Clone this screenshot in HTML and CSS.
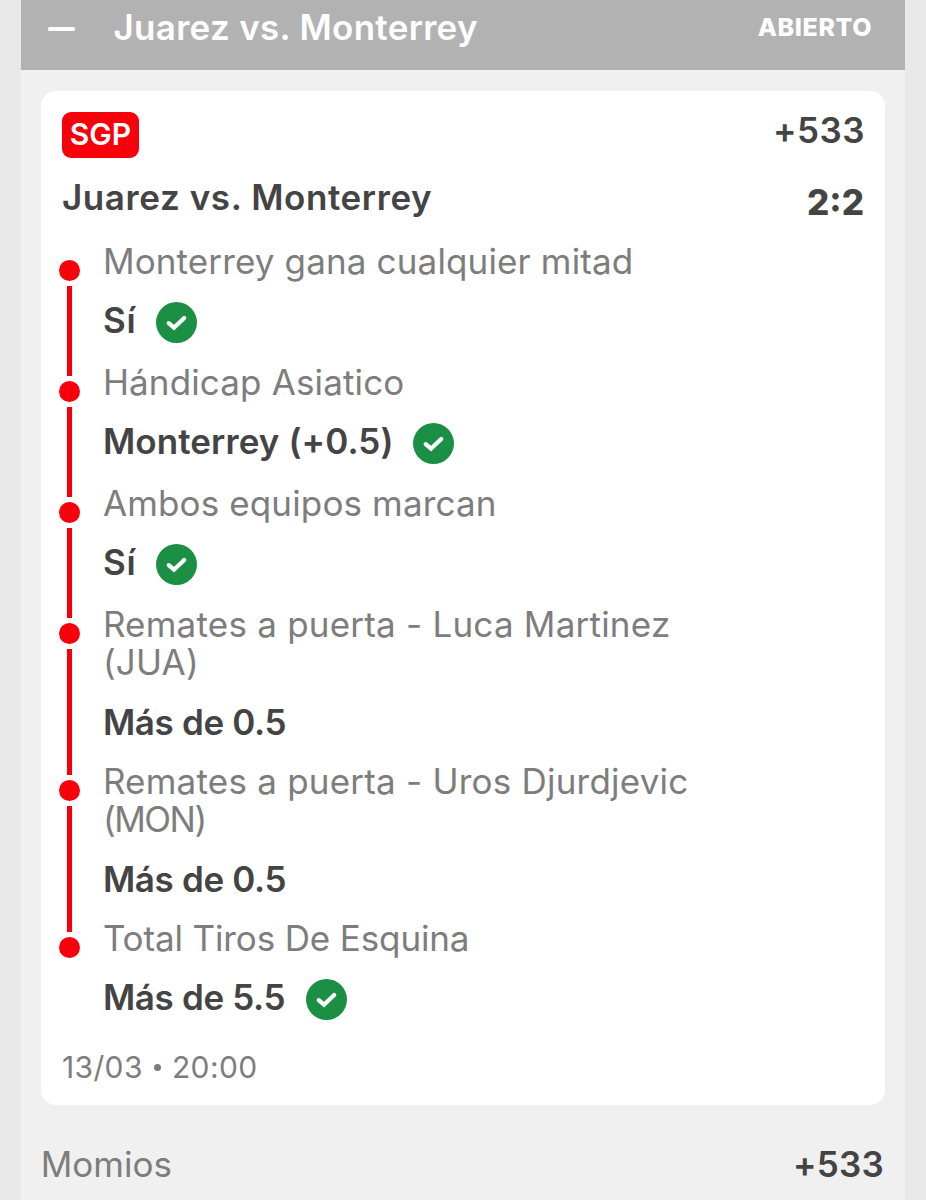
FILE: index.html
```
<!DOCTYPE html>
<html lang="es">
<head>
    <meta charset="UTF-8">
    <meta name="viewport" content="width=device-width, initial-scale=1.0">
    <title>Juarez vs. Monterrey</title>
    <link rel="stylesheet" href="styles.css">
</head>
<body>
    <!-- Check icon shared by the winning legs -->
    <svg class="sprite" aria-hidden="true">
        <symbol id="check" viewBox="0 0 41 41">
            <circle cx="20.5" cy="20.5" r="20.5" fill="#1b9044"/>
            <path d="M12.7 21.2 L18 25.7 L28.2 15.9" fill="none" stroke="#fff" stroke-width="4.2" stroke-linecap="round" stroke-linejoin="miter"/>
        </symbol>
    </svg>

    <div class="slip">
        <!-- Slip header -->
        <div class="slip-header">
            <span class="collapse"></span>
            <span class="slip-title">Juarez vs. Monterrey</span>
            <span class="status">ABIERTO</span>
        </div>

        <div class="card">
            <div class="card-top">
                <span class="badge">SGP</span>
                <span class="odds">+533</span>
            </div>
            <div class="event">
                <span class="event-name">Juarez vs. Monterrey</span>
                <span class="score">2:2</span>
            </div>

            <!-- Legs -->
            <div class="legs">
                <div class="leg">
                    <div class="rail"><span class="dot"></span><span class="line"></span></div>
                    <div class="leg-body">
                        <div class="market">Monterrey gana cualquier mitad</div>
                        <div class="pick">Sí <svg class="check"><use href="#check"/></svg></div>
                    </div>
                </div>
                <div class="leg">
                    <div class="rail"><span class="dot"></span><span class="line"></span></div>
                    <div class="leg-body">
                        <div class="market">Hándicap Asiatico</div>
                        <div class="pick wide">Monterrey (+0.5) <svg class="check"><use href="#check"/></svg></div>
                    </div>
                </div>
                <div class="leg">
                    <div class="rail"><span class="dot"></span><span class="line"></span></div>
                    <div class="leg-body">
                        <div class="market">Ambos equipos marcan</div>
                        <div class="pick">Sí <svg class="check"><use href="#check"/></svg></div>
                    </div>
                </div>
                <div class="leg">
                    <div class="rail"><span class="dot"></span><span class="line"></span></div>
                    <div class="leg-body">
                        <div class="market player">Remates a puerta - Luca Martinez <span class="team-jua">(JUA)</span></div>
                        <div class="pick tight">Más de 0.5</div>
                    </div>
                </div>
                <div class="leg">
                    <div class="rail"><span class="dot"></span><span class="line"></span></div>
                    <div class="leg-body">
                        <div class="market player">Remates a puerta - Uros Djurdjevic <span class="team-mon">(MON)</span></div>
                        <div class="pick tight">Más de 0.5</div>
                    </div>
                </div>
                <div class="leg">
                    <div class="rail"><span class="dot"></span></div>
                    <div class="leg-body">
                        <div class="market total">Total Tiros De Esquina</div>
                        <div class="pick tight">Más de 5.5 <svg class="check"><use href="#check"/></svg></div>
                    </div>
                </div>
            </div>

            <div class="date">13/03 <span class="bullet"></span> 20:00</div>
        </div>

        <!-- Slip footer -->
        <div class="slip-footer">
            <span>Momios</span>
            <span class="footer-odds">+533</span>
        </div>
    </div>
</body>
</html>
```
FILE: styles.css
```
* {
    box-sizing: border-box;
}
body {
    margin: 0;
    height: 1200px;
    overflow: hidden;
    background-color: #e9e9e9;
    color: #444;
    font-family: Inter, sans-serif;
    font-size: 35px;
    line-height: 38.5px;
}
.sprite {
    display: none;
}
.slip {
    width: 884.5px;
    height: 1200px;
    margin-left: 20.7px;
    background-color: #f0f0f0;
}
.slip-header {
    display: flex;
    align-items: center;
    height: 70px;
    padding: 0 33px 15px 27.3px;
    background-color: #b2b2b2;
    color: #fff;
}
.collapse {
    width: 27.5px;
    height: 4px;
    margin-top: 2px;
    border-radius: 1.5px;
    background-color: #fff;
}
.slip-title {
    margin-left: 38px;
    font-weight: 600;
    letter-spacing: 0.3px;
}
.status {
    margin-left: auto;
    font-size: 25px;
    font-weight: 800;
    letter-spacing: 0.6px;
}
.card {
    height: 1014px;
    margin: 21px 20.2px 0;
    padding: 20.5px 21px 0;
    border-radius: 15px;
    background-color: #fff;
}
.card-top {
    display: flex;
    justify-content: space-between;
    align-items: flex-start;
    height: 66.5px;
}
.badge {
    width: 77px;
    height: 46px;
    border-radius: 9px;
    background-color: #f8000b;
    color: #fff;
    font-size: 30px;
    font-weight: 600;
    line-height: 45px;
    text-align: center;
}
.odds {
    font-weight: 600;
    line-height: 37px;
    letter-spacing: 0.5px;
    margin-right: -1px;
}
.event {
    display: flex;
    justify-content: space-between;
    height: 63.9px;
}
.event-name {
    font-weight: 600;
    letter-spacing: 0.6px;
}
.score {
    padding-top: 5px;
    font-weight: 800;
}
.leg {
    display: flex;
    padding-bottom: 20.5px;
}
.rail {
    display: flex;
    flex-direction: column;
    align-items: center;
    gap: 5px;
    width: 21px;
    margin: 0 23px -33.5px -3px;
    padding-top: 18.3px;
}
.dot {
    width: 21px;
    height: 21px;
    border-radius: 50%;
    background-color: #f8000b;
}
.line {
    flex: 1;
    width: 5px;
    background-color: #f8000b;
}
.leg-body {
    width: 610px;
}
.market {
    margin-bottom: 21px;
    color: #7d7d7d;
    letter-spacing: 0.14px;
}
.player {
    letter-spacing: 0.22px;
}
.total {
    letter-spacing: -0.13px;
}
.team-jua {
    letter-spacing: 0.2px;
}
.team-mon {
    letter-spacing: -1.5px;
}
.pick {
    display: flex;
    align-items: flex-start;
    gap: 19.6px;
    font-weight: 600;
    letter-spacing: 0.8px;
}
.wide {
    letter-spacing: 0.1px;
}
.tight {
    gap: 20.5px;
    letter-spacing: -0.35px;
}
.check {
    width: 41px;
    height: 41px;
    margin: 0.7px 0 -0.7px;
}
.date {
    display: flex;
    align-items: center;
    gap: 11px;
    margin-top: 8px;
    color: #7d7d7d;
    font-size: 30px;
    letter-spacing: 0.4px;
}
.bullet {
    width: 7px;
    height: 7px;
    border-radius: 50%;
    background-color: #7d7d7d;
}
.slip-footer {
    display: flex;
    justify-content: space-between;
    padding: 40px 21px 0 20px;
    color: #7d7d7d;
}
.footer-odds {
    color: #444;
    font-weight: 600;
    letter-spacing: 0.3px;
}
```
